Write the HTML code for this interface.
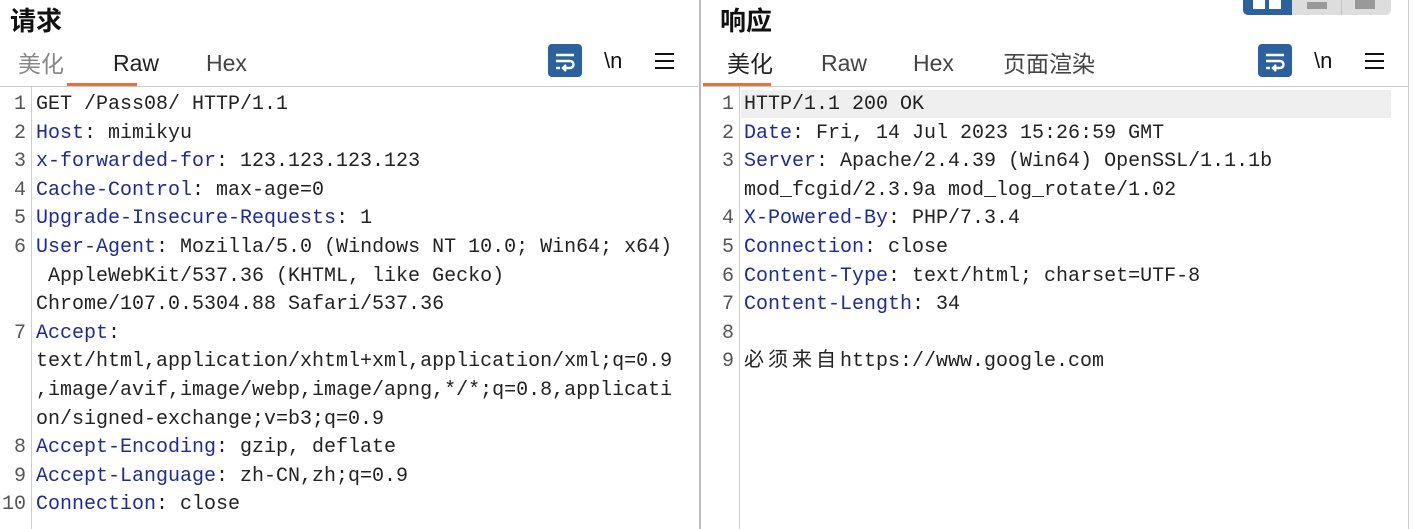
<!DOCTYPE html>
<html><head><meta charset="utf-8"><style>
*{margin:0;padding:0;box-sizing:border-box}
body{width:1413px;height:529px;background:#fff;position:relative;overflow:hidden;font-family:"Liberation Sans","Noto Sans CJK SC",sans-serif}
.a{position:absolute;white-space:pre}
.t{font-size:26px;font-weight:bold;color:#111;top:1px}
.tab{font-size:23px;color:#444;line-height:30px}
.lt{top:48px}
.ct{top:49px}
.mono{font-family:"Liberation Mono","Noto Sans CJK SC",monospace;font-size:20px;color:#222;line-height:28.6px}
.k{color:#1c2a9c}
.n{color:#555;text-align:right;width:24px}
.btn{position:absolute;width:34px;height:33px;background:#2a62a0;border-radius:4px;top:44px}
</style></head><body>
<div class="a t" style="left:10px">请求</div>
<div class="a t" style="left:720px">响应</div>
<div class="a" style="left:1243px;top:-4px;width:148px;height:19px;background:#ddd;border-radius:5px;overflow:hidden">
<div style="position:absolute;left:0;top:0;width:49px;height:19px;background:#2a62a0"></div>
<div style="position:absolute;left:10px;top:4px;width:12px;height:9px;background:#fff"></div>
<div style="position:absolute;left:26px;top:4px;width:12px;height:9px;background:#fff"></div>
<div style="position:absolute;left:98px;top:0;width:1px;height:19px;background:#c8c8c8"></div>
<div style="position:absolute;left:64px;top:6px;width:20px;height:7px;background:#999"></div>
<div style="position:absolute;left:112px;top:4px;width:20px;height:9px;background:#999"></div>
</div>
<div class="a tab ct" style="left:18px;color:#888">美化</div>
<div class="a tab lt" style="left:113px;color:#222">Raw</div>
<div class="a tab lt" style="left:206px">Hex</div>
<div class="a" style="left:67px;top:83px;width:70px;height:3px;background:#e8703a"></div>
<div class="a" style="left:0;top:86px;width:698px;height:1px;background:#ccc"></div>
<div class="a tab ct" style="left:727px;color:#222">美化</div>
<div class="a tab lt" style="left:821px">Raw</div>
<div class="a tab lt" style="left:913px">Hex</div>
<div class="a tab ct" style="left:1003px">页面渲染</div>
<div class="a" style="left:703px;top:83px;width:68px;height:3px;background:#e8703a"></div>
<div class="a" style="left:703px;top:86px;width:705px;height:1px;background:#ccc"></div>
<div class="btn" style="left:548px"><svg width="34" height="33"><g stroke="#fff" stroke-width="2.4" fill="none"><path d="M8 11h18"/><path d="M8 17h14a3.5 3.5 0 0 1 0 7h-6"/><path d="M18 21l-3 3 3 3"/><path d="M8 24h4"/></g></svg></div>
<div class="btn" style="left:1258px"><svg width="34" height="33"><g stroke="#fff" stroke-width="2.4" fill="none"><path d="M8 11h18"/><path d="M8 17h14a3.5 3.5 0 0 1 0 7h-6"/><path d="M18 21l-3 3 3 3"/><path d="M8 24h4"/></g></svg></div>
<div class="a" style="left:604px;top:48px;font-size:22px;color:#111">\n</div>
<div class="a" style="left:1314px;top:48px;font-size:22px;color:#111">\n</div>
<div class="a" style="left:655px;top:53px;width:19px;height:16px;border-top:2px solid #111;border-bottom:2px solid #111"><div style="margin-top:5px;height:2px;background:#111"></div></div>
<div class="a" style="left:1365px;top:53px;width:19px;height:16px;border-top:2px solid #111;border-bottom:2px solid #111"><div style="margin-top:5px;height:2px;background:#111"></div></div>
<div class="a" style="left:699px;top:0;width:2px;height:529px;background:#bbb"></div>
<div class="a" style="left:31px;top:87px;width:1px;height:442px;background:#ccc"></div>
<div class="a" style="left:739px;top:87px;width:1px;height:442px;background:#ccc"></div>
<div class="a" style="left:1408px;top:0;width:1px;height:529px;background:#ccc"></div>
<div class="a" style="left:741px;top:90px;width:650px;height:28px;background:#efefef"></div>
<div class="a mono n" style="left:2px;top:91px">1
2
3
4
5
6


7



8
9
10</div>
<div class="a mono" style="left:36px;top:91px">GET /Pass08/ HTTP/1.1
<span class="k">Host</span>: mimikyu
<span class="k">x-forwarded-for</span>: 123.123.123.123
<span class="k">Cache-Control</span>: max-age=0
<span class="k">Upgrade-Insecure-Requests</span>: 1
<span class="k">User-Agent</span>: Mozilla/5.0 (Windows NT 10.0; Win64; x64)
 AppleWebKit/537.36 (KHTML, like Gecko)
Chrome/107.0.5304.88 Safari/537.36
<span class="k">Accept</span>:
text/html,application/xhtml+xml,application/xml;q=0.9
,image/avif,image/webp,image/apng,*/*;q=0.8,applicati
on/signed-exchange;v=b3;q=0.9
<span class="k">Accept-Encoding</span>: gzip, deflate
<span class="k">Accept-Language</span>: zh-CN,zh;q=0.9
<span class="k">Connection</span>: close</div>
<div class="a mono n" style="left:710px;top:91px">1
2
3

4
5
6
7
8
9</div>
<div class="a mono" style="left:744px;top:91px">HTTP/1.1 200 OK
<span class="k">Date</span>: Fri, 14 Jul 2023 15:26:59 GMT
<span class="k">Server</span>: Apache/2.4.39 (Win64) OpenSSL/1.1.1b
mod_fcgid/2.3.9a mod_log_rotate/1.02
<span class="k">X-Powered-By</span>: PHP/7.3.4
<span class="k">Connection</span>: close
<span class="k">Content-Type</span>: text/html; charset=UTF-8
<span class="k">Content-Length</span>: 34

<span style="letter-spacing:4px">必须来自</span>https://www.google.com</div>
</body></html>
